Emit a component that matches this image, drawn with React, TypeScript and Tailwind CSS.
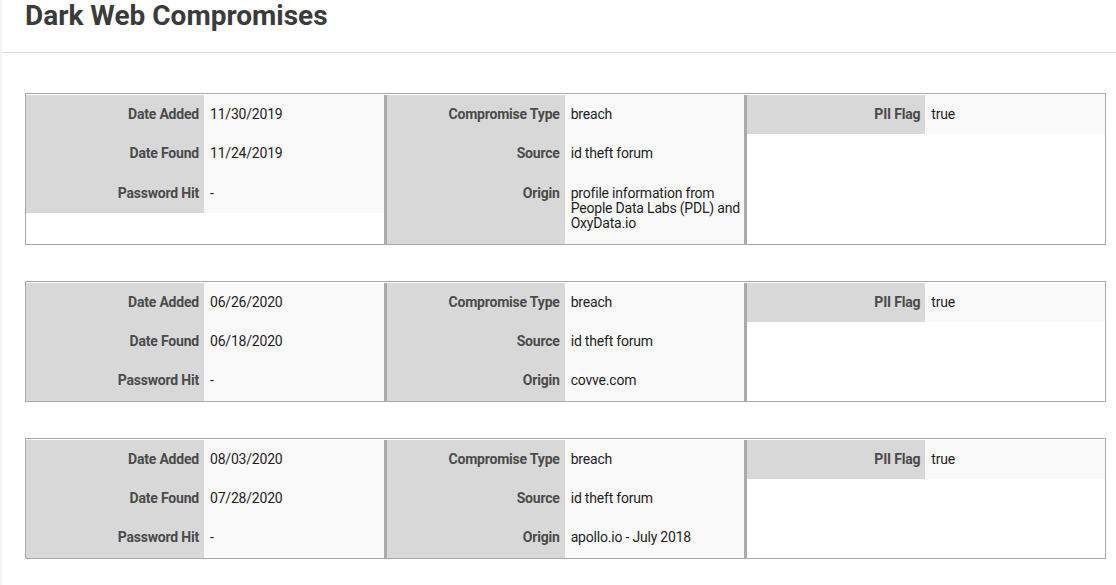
type Row = { label: string; value: string };

type Compromise = {
  id: number;
  left: Row[];
  middle: Row[];
  right: Row[];
};

const compromises: Compromise[] = [
  {
    id: 1,
    left: [
      { label: "Date Added", value: "11/30/2019" },
      { label: "Date Found", value: "11/24/2019" },
      { label: "Password Hit", value: "-" },
    ],
    middle: [
      { label: "Compromise Type", value: "breach" },
      { label: "Source", value: "id theft forum" },
      {
        label: "Origin",
        value: "profile information from People Data Labs (PDL) and OxyData.io",
      },
    ],
    right: [{ label: "PII Flag", value: "true" }],
  },
  {
    id: 2,
    left: [
      { label: "Date Added", value: "06/26/2020" },
      { label: "Date Found", value: "06/18/2020" },
      { label: "Password Hit", value: "-" },
    ],
    middle: [
      { label: "Compromise Type", value: "breach" },
      { label: "Source", value: "id theft forum" },
      { label: "Origin", value: "covve.com" },
    ],
    right: [{ label: "PII Flag", value: "true" }],
  },
  {
    id: 3,
    left: [
      { label: "Date Added", value: "08/03/2020" },
      { label: "Date Found", value: "07/28/2020" },
      { label: "Password Hit", value: "-" },
    ],
    middle: [
      { label: "Compromise Type", value: "breach" },
      { label: "Source", value: "id theft forum" },
      { label: "Origin", value: "apollo.io - July 2018" },
    ],
    right: [{ label: "PII Flag", value: "true" }],
  },
];

function Column({ rows, divider }: { rows: Row[]; divider: boolean }) {
  return (
    <div
      className={`flex-1 ${divider ? "border-r-[3px] border-[#ababab]" : ""}`}
    >
      <div className="grid grid-cols-[178px_1fr]">
        {rows.map((row) => (
          <div key={row.label} className="contents">
            <div className="bg-[#d8d8d8] py-3 pr-[5px] text-right text-[14px] leading-[15.34px] font-bold tracking-[-0.2px] text-[#4b4b4b]">
              {row.label}
            </div>
            <div className="bg-[#f9f9f9] py-3 pl-[6px] text-[14px] leading-[15.34px] tracking-[-0.2px] text-[#1e1e1e]">
              {row.value}
            </div>
          </div>
        ))}
      </div>
    </div>
  );
}

function CompromiseCard({ item }: { item: Compromise }) {
  return (
    <div className="flex border border-[#a9a9a9] pt-px">
      <Column rows={item.left} divider />
      <Column rows={item.middle} divider />
      <Column rows={item.right} divider={false} />
    </div>
  );
}

export default function App() {
  return (
    <div
      className="min-h-screen border-l-2 border-[#f3f3f3] bg-white"
      style={{ fontFamily: "Roboto, 'Liberation Sans', sans-serif" }}
    >
      <div className="h-[53px] border-b border-[#dcdcdc] pl-[23px]">
        <h1 className="pt-0 text-[28px] leading-[31px] font-bold text-[#3b3b3b]">
          Dark Web Compromises
        </h1>
      </div>

      <div className="flex w-[1104px] flex-col gap-[36px] pt-[40px] pl-[23px]">
        {compromises.map((c) => (
          <CompromiseCard key={c.id} item={c} />
        ))}
      </div>
    </div>
  );
}
